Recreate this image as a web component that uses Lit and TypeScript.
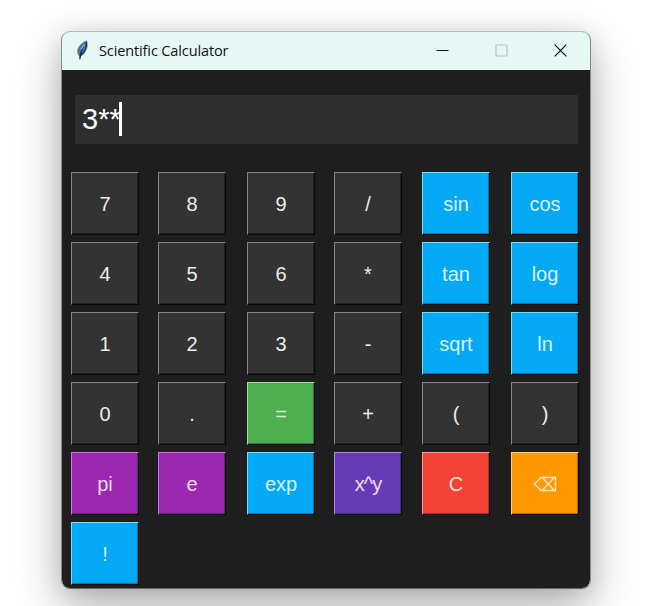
import { LitElement, html, css, svg } from "lit";
import { customElement, property, state } from "lit/decorators.js";

interface Key {
  label: string;
  tone: string;
}

const k = (label: string, tone = "dark"): Key => ({ label, tone });

const KEYS: Key[] = [
  k("7"), k("8"), k("9"), k("/"), k("sin", "blue"), k("cos", "blue"),
  k("4"), k("5"), k("6"), k("*"), k("tan", "blue"), k("log", "blue"),
  k("1"), k("2"), k("3"), k("-"), k("sqrt", "blue"), k("ln", "blue"),
  k("0"), k("."), k("=", "green"), k("+"), k("("), k(")"),
  k("pi", "purple"), k("e", "purple"), k("exp", "blue"), k("x^y", "violet"), k("C", "red"), k("⌫", "orange"),
  k("!", "blue"),
];

const feather = svg`
  <path d="M4.6 16.6 3 13.8C1.4 9.8 4.6 3.6 11.6 .8 13.4 5.6 11.4 11.8 7.2 15.2L5.6 16Z" fill="#5d6870" stroke="#6b757b" stroke-width=".7"/>
  <path d="M4.2 13.6C3.6 9.2 6.4 4.4 10.4 2.4 11 7 9.4 11.6 6 14Z" fill="#3f84d0"/>
  <path d="M11.4 2.2C11.6 7 10 11.4 6.4 14.8" fill="none" stroke="#1c2a3a" stroke-width="1.1"/>
  <path d="M8.6 6.2C6.6 9.6 5.2 13.6 4.8 19.4" fill="none" stroke="#1b242c" stroke-width="1.2"/>
  <path d="M9.2 4.4 6.2 9.4" stroke="#7db6ee" stroke-width="1.1"/>
`;

@customElement("calc-key")
export class CalcKey extends LitElement {
  @property() label = "";
  @property() tone = "dark";

  static styles = css`
    :host {
      display: block;
      width: 68px;
      height: 63px;
    }
    .key {
      display: flex;
      align-items: center;
      justify-content: center;
      box-sizing: border-box;
      width: 100%;
      height: 100%;
      margin: 0;
      padding: 0;
      border-style: solid;
      border-width: 1px;
      border-color: var(--hi) #080808 #080808 var(--hi);
      box-shadow: inset -1px -1px 0 var(--lo);
      background: var(--face);
      color: var(--ink);
      font: 20px/24px "Liberation Sans", Arial, sans-serif;
    }
    .dark { --face: #333333; --hi: #858585; --lo: #202020; --ink: #ececec; }
    .blue { --face: #03a9f4; --hi: #72dcfb; --lo: #0676a9; --ink: #d9f1fd; }
    .green { --face: #4caf50; --hi: #98e69a; --lo: #347a37; --ink: #d5edd6; }
    .purple { --face: #9c27b0; --hi: #cd7bdb; --lo: #6d1b7b; --ink: #efdcf2; }
    .violet { --face: #673ab7; --hi: #a88ae4; --lo: #482880; --ink: #e8e1f4; letter-spacing: -0.9px; }
    .red { --face: #f44336; --hi: #fa9a94; --lo: #ab2f26; --ink: #fde0de; }
    .orange { --face: #ff9800; --hi: #ffcf7d; --lo: #b26a00; --ink: #ffe9c8; }
    .erase { width: 24px; height: 16px; margin-top: 1px; }
  `;

  render() {
    return html`<button class="key ${this.tone}">
      ${this.label === "⌫"
        ? html`<svg class="erase" viewBox="0 0 24 16" fill="none" stroke="currentColor" stroke-width="1.3" aria-label="Backspace">
            <path d="M1.5 8 8 1.5H22.5V14.5H8ZM9.4 2 21 14M21 2 9.4 14" />
          </svg>`
        : this.label}
    </button>`;
  }
}

@customElement("app-root")
export class AppRoot extends LitElement {
  @state() private entry = "3**";

  static styles = css`
    :host {
      display: block;
      box-sizing: border-box;
      width: 652px;
      height: 606px;
      padding: 31px 0 0 61px;
      overflow: hidden;
      background: #fff;
    }
    .window {
      box-sizing: border-box;
      width: 530px;
      height: 558px;
      border: 1px solid;
      border-color: #b4bab8 #8c8c8c #666 #8c8c8c;
      border-radius: 9px;
      background: #1e1e1e;
      background-clip: padding-box;
      overflow: hidden;
      box-shadow: 0 18px 46px rgba(0, 0, 0, 0.3), 0 2px 24px rgba(0, 0, 0, 0.1);
    }
    .titlebar {
      display: flex;
      align-items: center;
      height: 38px;
      background: #e5f8f4;
      color: #111;
    }
    .feather {
      width: 14px;
      height: 20px;
      margin: -2px 10px 0 13px;
    }
    .title {
      flex: 1;
      font: 14.5px/20px "Open Sans", "Noto Sans", sans-serif;
      letter-spacing: -0.12px;
      white-space: nowrap;
    }
    .controls {
      display: flex;
      gap: 46px;
      margin-right: 23px;
    }
    .control {
      width: 13px;
      height: 13px;
      margin-top: -1px;
      fill: none;
      stroke: #111;
      stroke-width: 1.2;
    }
    .disabled { stroke: #b5c4c1; }
    .display {
      display: flex;
      align-items: center;
      box-sizing: border-box;
      height: 49px;
      margin: 25px 12px 28px 13px;
      padding: 0 0 1px 7px;
      background: #2e2e2e;
      color: #fff;
      font: 29px/34px "Liberation Sans", Arial, sans-serif;
    }
    .caret {
      width: 2.5px;
      height: 34px;
      margin: 0 0 0 -1.5px;
      background: #fff;
    }
    .keys {
      display: grid;
      grid-template-columns: 87px 89px 87px 88px 89px 68px;
      grid-auto-rows: 63px;
      row-gap: 7px;
      margin-left: 9px;
    }
  `;

  render() {
    return html`
      <div class="window">
        <div class="titlebar">
          <svg class="feather" viewBox="0 0 14 20">${feather}</svg>
          <span class="title">Scientific Calculator</span>
          <div class="controls">
            <svg class="control" viewBox="0 0 13 13"><path d="M.5 6.5H12.5" /></svg>
            <svg class="control disabled" viewBox="0 0 13 13"><rect x="1" y="1" width="11" height="11" rx="1" /></svg>
            <svg class="control" viewBox="0 0 13 13"><path d="M.7.7 12.3 12.3M12.3.7.7 12.3" /></svg>
          </div>
        </div>
        <div class="display"><span>${this.entry}</span><span class="caret"></span></div>
        <div class="keys">
          ${KEYS.map((key) => html`<calc-key .label=${key.label} .tone=${key.tone}></calc-key>`)}
        </div>
      </div>
    `;
  }
}
